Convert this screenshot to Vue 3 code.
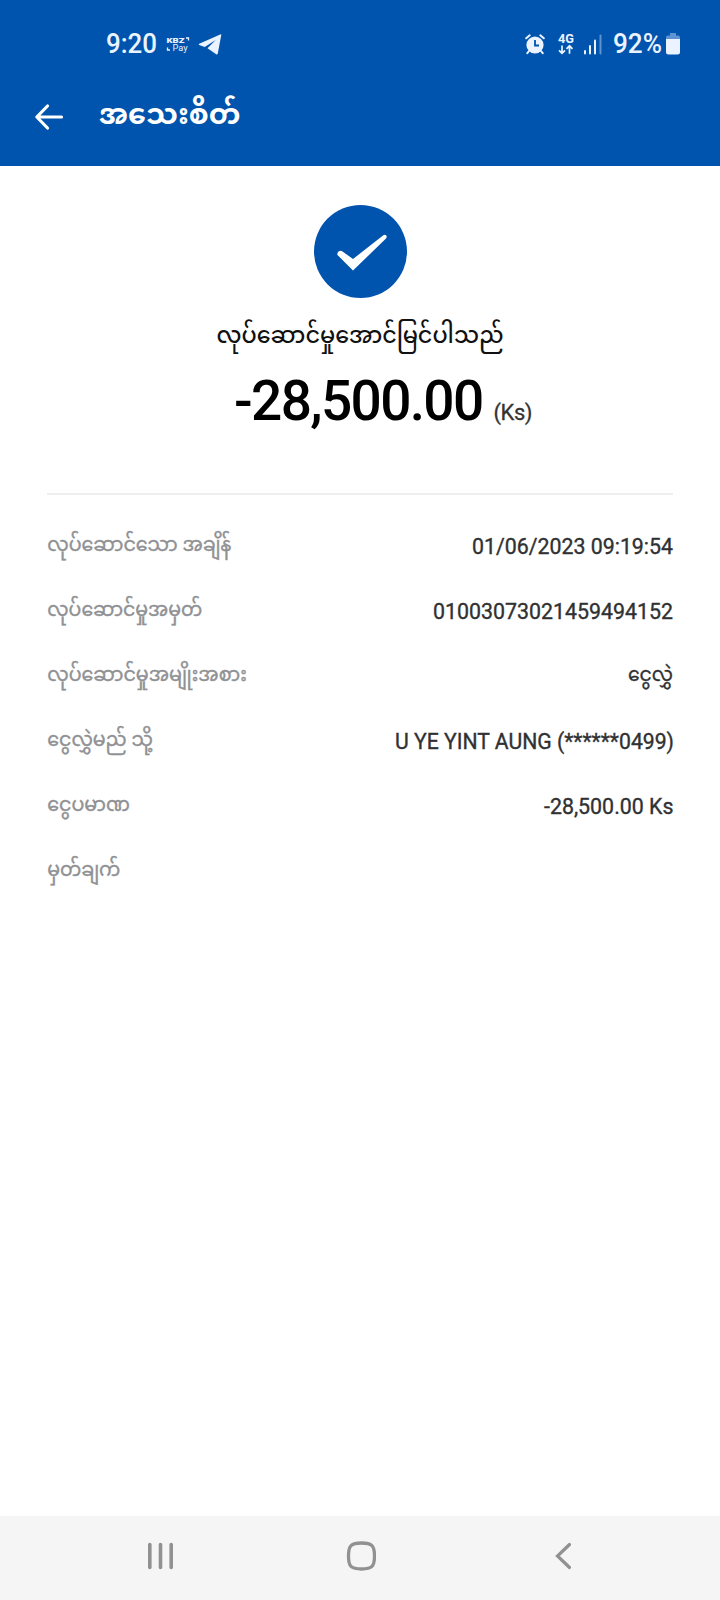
<script setup>
const rows = [
  { label: 'လုပ်ဆောင်သော အချိန်', w: 184, value: '01/06/2023 09:19:54', vw: 201 },
  { label: 'လုပ်ဆောင်မှုအမှတ်', w: 155, value: '01003073021459494152', vw: 240 },
  { label: 'လုပ်ဆောင်မှုအမျိုးအစား', w: 199.5, value: 'ငွေလွှဲ', vw: 45, burmese: true },
  { label: 'ငွေလွှဲမည် သို့', w: 105.5, value: 'U YE YINT AUNG (******0499)', vw: 279, shift: 1 },
  { label: 'ငွေပမာဏ', w: 82.5, value: '-28,500.00 Ks', vw: 129.5 },
  { label: 'မှတ်ချက်', w: 73, value: '', vw: 0 },
]
</script>

<template>
  <div class="screen">
    <header class="top">
      <div class="status">
        <div class="group">
          <svg class="line clock" width="60" height="50">
            <text x="0" y="34" class="time" textLength="51" lengthAdjust="spacingAndGlyphs">9:20</text>
          </svg>
          <svg class="kbz" width="24" height="24" viewBox="0 0 24 24">
            <text x="0.5" y="10.7" class="k1" textLength="18" lengthAdjust="spacingAndGlyphs">KBZ</text>
            <text x="6.5" y="18.500" class="k2" textLength="15" lengthAdjust="spacingAndGlyphs">Pay</text>
            <path d="M20 6h2.5v2.5M1.500 15.500v2.5h2.500" fill="none" stroke="#eaf3ff" stroke-width="1.3" />
          </svg>
          <svg class="plane" width="24" height="24" viewBox="0 0 24 24">
            <path d="M23.2 1.2Q23.6 0 22.2 .5L1.2 9.8Q0 10.4 1.2 11L6.7 13L17.7 6L9.5 14.2L18.2 20.3Q19.4 21 19.8 19.5Z" fill="#eaf3ff" />
          </svg>
        </div>
        <div class="group">
          <svg class="alarm" width="20" height="21" viewBox="0 0 20 21">
            <g fill="none" stroke="#eaf3ff" stroke-width="2" stroke-linecap="round">
              <path d="M1.2 4.3L4.7 1.3M18.8 4.3L15.3 1.3M4 17L2.3 19.2M16 17L17.7 19.2" />
            </g>
            <circle cx="10" cy="11" r="8.6" fill="#eaf3ff" />
            <path d="M10 6V11.5H14" fill="none" stroke="#0054ad" stroke-width="1.8" />
          </svg>
          <svg class="net" width="18" height="22" viewBox="0 0 18 22">
            <text x="1" y="10" class="g4" textLength="16" lengthAdjust="spacingAndGlyphs">4G</text>
            <path d="M5 12.5V20M2 17.3L5 20.3L8 17.3M12.5 20.8V13M9.5 15.8L12.5 12.8L15.5 15.8" fill="none" stroke="#eaf3ff" stroke-width="1.7" />
          </svg>
          <svg class="signal" width="20" height="21" viewBox="0 0 20 21">
            <g fill="#eaf3ff">
              <rect x="1" y="16" width="2" height="4.5" rx="1" />
              <rect x="6" y="11" width="2" height="9.5" rx="1" />
              <rect x="11" y="5.5" width="2" height="15" rx="1" />
              <rect x="16.5" y="0.5" width="2" height="20" rx="1" opacity=".4" />
            </g>
          </svg>
          <svg class="line pct" width="53" height="50">
            <text x="0" y="34" class="time" textLength="49" lengthAdjust="spacingAndGlyphs">92%</text>
          </svg>
          <svg class="battery" width="14" height="22" viewBox="0 0 14 22">
            <path d="M4 0H10V2.5H12Q14 2.5 14 4.5V7H0V4.5Q0 2.5 2 2.5H4Z" fill="#5e94d3" />
            <path d="M0 6H14V19Q14 21.5 11.5 21.5H2.5Q0 21.5 0 19Z" fill="#eaf3ff" />
          </svg>
        </div>
      </div>
      <div class="appbar">
        <svg class="back" width="30" height="28" viewBox="0 0 30 28">
          <path d="M27.5 14H3M13.5 3L2.800 14L13.5 25" fill="none" stroke="#fff" stroke-width="3.200" stroke-linecap="round" stroke-linejoin="round" />
        </svg>
        <svg class="line" width="150" height="60">
          <text x="0" y="36.500" class="title" textLength="141.500" lengthAdjust="spacingAndGlyphs">အသေးစိတ်</text>
        </svg>
      </div>
    </header>

    <main class="body">
      <section class="summary">
        <svg class="tick line" width="94" height="94" viewBox="0 0 94 94">
          <circle cx="47.500" cy="47.500" r="46.5" fill="#0054ad" />
          <path d="M24.5 51Q23.8 49 25.5 47.500Q27.500 46 29.500 47.500L40 55L70 31.500Q72 30 73.3 31.500Q74.3 33 73 34.500L40 66.500Z" fill="#fff" />
        </svg>
        <svg class="line message" width="288" height="50">
          <text x="0.500" y="32.500" class="msg" textLength="287" lengthAdjust="spacingAndGlyphs">လုပ်ဆောင်မှုအောင်မြင်ပါသည်</text>
        </svg>
        <div class="amount">
          <span class="num">-28,500.00</span><span class="unit">(Ks)</span>
        </div>
      </section>
      <div class="details">
        <div v-for="r in rows" :key="r.label" class="row">
          <svg class="line" :width="r.w + 2" height="65">
            <text x="0.300" y="42" class="label" :textLength="r.w" lengthAdjust="spacingAndGlyphs">{{ r.label }}</text>
          </svg>
          <svg v-if="r.value" class="line" :width="r.vw" height="65">
            <text :x="r.shift || 0" :y="r.burmese ? 42 : 45" :class="r.burmese ? 'value mm' : 'value'" :textLength="r.vw" lengthAdjust="spacingAndGlyphs">{{ r.value }}</text>
          </svg>
        </div>
      </div>
    </main>

    <nav class="nav">
      <svg width="30" height="30" viewBox="0 0 30 30">
        <path d="M4.8 3.5V26.5M15.5 3.5V26.5M26.2 3.5V26.5" stroke="#919191" stroke-width="3.6" stroke-linecap="round" />
      </svg>
      <svg width="30" height="30" viewBox="0 0 30 30">
        <path d="M15.500 2C26 2 28.500 4.5 28.500 15S26 28 15.500 28S2.500 25.5 2.500 15S5 2 15.500 2Z" fill="none" stroke="#919191" stroke-width="3.300" />
      </svg>
      <svg width="30" height="30" viewBox="0 0 30 30">
        <path d="M22.500 3.500L10.500 15L22.500 26.500" fill="none" stroke="#919191" stroke-width="3.200" stroke-linecap="round" />
      </svg>
    </nav>
  </div>
</template>

<style>
body { margin: 0; }
</style>

<style scoped>
.screen {
  width: 720px;
  height: 1600px;
  display: flex;
  flex-direction: column;
  background: #fff;
  font-family: Roboto, "Noto Sans Myanmar", "Noto Sans", sans-serif;
  overflow: hidden;
}
svg { display: block; flex: none; }
.line { overflow: visible; }
.top { height: 166px; background: #0054ad; flex: none; }
.status {
  height: 50px;
  padding: 19px 40px 0 106px;
  display: flex;
  justify-content: space-between;
}
.group { display: flex; align-items: center; height: 50px; }
.time { font-size: 27px; font-weight: 500; fill: #eaf3ff; }
.plane { margin-left: 8px; margin-top: 4px; }
.k1 { font-size: 8px; font-weight: 900; fill: #eaf3ff; }
.k2 { font-size: 9px; fill: #eaf3ff; }
.g4 { font-size: 12px; font-weight: 700; fill: #eaf3ff; }
.net { margin-left: 12px; }
.signal { margin-left: 8px; }
.pct { margin-left: 10px; }
.appbar { display: flex; align-items: center; height: 60px; padding: 18px 34px 0; }
.title { font-size: 29px; font-weight: 700; fill: #fff; }
.appbar .line { margin-left: 35px; }
.body { flex: 1; }
.summary {
  display: flex;
  flex-direction: column;
  align-items: center;
  height: 327px;
  padding-top: 38px;
  box-sizing: border-box;
}
.message { margin-top: 12px; }
.msg { font-size: 23px; font-weight: 500; fill: #111; }
.amount {
  display: flex;
  align-items: baseline;
  align-self: flex-start;
  margin: 9px 0 0 234px;
  white-space: nowrap;
}
.num { font-size: 55px; line-height: 64px; font-weight: 500; color: #000; letter-spacing: -1.65px; }
.unit { font-size: 22px; line-height: 26px; color: #333; margin-left: 11px; letter-spacing: -0.5px; -webkit-text-stroke: 0.3px #333; }
.details { margin: 0 47px; border-top: 2px solid #eee; padding-top: 14px; }
.row { display: flex; justify-content: space-between; height: 65px; }
.label { font-size: 20px; fill: #8f9194; stroke: #8f9194; stroke-width: 0.4px; }
.value { font-size: 21.300px; fill: #303133; stroke: #303133; stroke-width: 0.35px; }
.mm { font-size: 20px; }
.nav {
  height: 84px;
  background: #f5f5f5;
  display: flex;
  align-items: center;
  justify-content: space-between;
  padding: 0 143px 4px 145px;
  box-sizing: border-box;
}
</style>
